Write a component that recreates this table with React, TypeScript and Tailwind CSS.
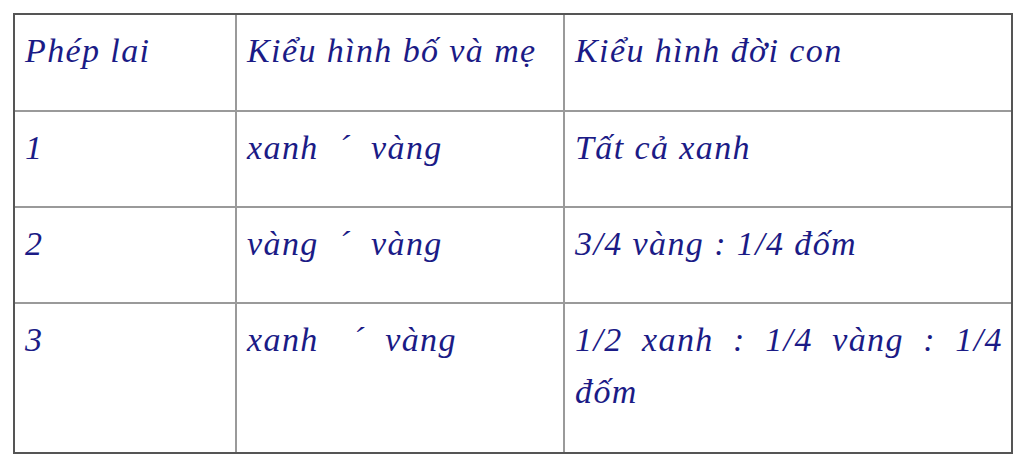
import React from "react";

const rows: { a: string; b: string; c: string }[] = [
  { a: "1", b: "xanh\u00a0\u00a0´\u00a0\u00a0vàng", c: "Tất cả xanh" },
  { a: "2", b: "vàng\u00a0\u00a0´\u00a0\u00a0vàng", c: "3/4 vàng : 1/4 đốm" },
  { a: "3", b: "xanh\u00a0\u00a0\u00a0\u200a´\u00a0\u00a0vàng", c: "1/2 xanh : 1/4 vàng : 1/4 đốm" },
];

export default function App() {
  const cell =
    "border-2 border-[#9a9a9a] align-top pl-[10px] pr-[8px] pt-[10px] leading-[52px] font-['Liberation_Serif','Times_New_Roman',serif] italic text-[34px] tracking-[1.4px] text-[#1b1b86]";
  return (
    <div className="w-[1024px] h-[467px] bg-white pt-[13px] pl-[13px]">
      <div className="w-[1000px] border-2 border-[#555555]">
        <table className="table-fixed border-collapse border-hidden w-full">
          <colgroup>
            <col className="w-[221px]" />
            <col className="w-[328px]" />
            <col className="w-[447px]" />
          </colgroup>
          <tbody>
            <tr className="h-[96px]">
              <td className={cell}>Phép lai</td>
              <td className={cell}>Kiểu hình bố và mẹ</td>
              <td className={cell}>Kiểu hình đời con</td>
            </tr>
            {rows.map((r, i) => (
              <tr key={i} className={i === 2 ? "h-[149px]" : "h-[96px]"}>
                <td className={cell}>{r.a}</td>
                <td className={cell}>{r.b}</td>
                <td className={cell + " text-justify"}>{r.c}</td>
              </tr>
            ))}
          </tbody>
        </table>
      </div>
    </div>
  );
}
